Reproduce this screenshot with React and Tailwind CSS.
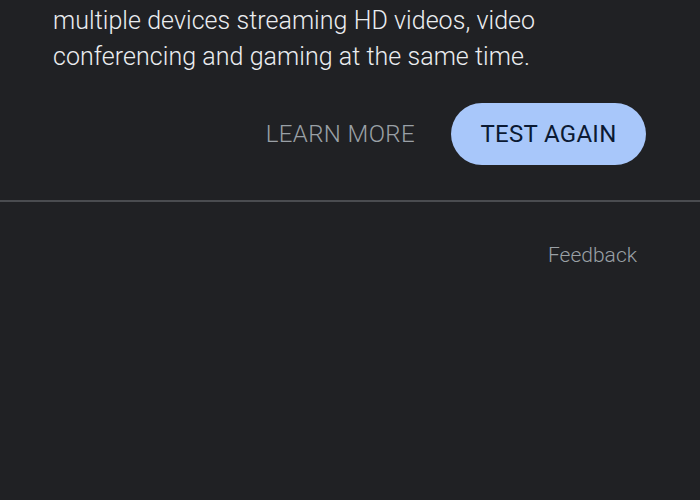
import React from 'react';

export default function App() {
  return (
    <div className="w-[700px] h-[500px] overflow-hidden bg-[#202124] font-['Roboto',sans-serif]">
      <div className="px-[53px] pt-[3px]">
        <p className="text-[25px] leading-[36px] font-light text-[#ebedf0] tracking-[0.05px]">
          multiple devices streaming HD videos, video
          <br />
          conferencing and gaming at the same time.
        </p>
      </div>
      <div className="flex items-center justify-end gap-[36px] pr-[54px] mt-[28px]">
        <button className="text-[24px] font-light text-[#9aa0a6] tracking-[0.4px]">LEARN MORE</button>
        <button className="w-[195px] h-[62px] rounded-full bg-[#a8c7fa] text-[24px] text-[#0b1a33] tracking-[0.3px]">
          TEST AGAIN
        </button>
      </div>
      <div className="mt-[35px] h-[2px] bg-[#4a4c50]" />
      <div className="flex justify-end pr-[63px] mt-[38px]">
        <button className="text-[21px] font-light text-[#9aa0a6]">Feedback</button>
      </div>
    </div>
  );
}
